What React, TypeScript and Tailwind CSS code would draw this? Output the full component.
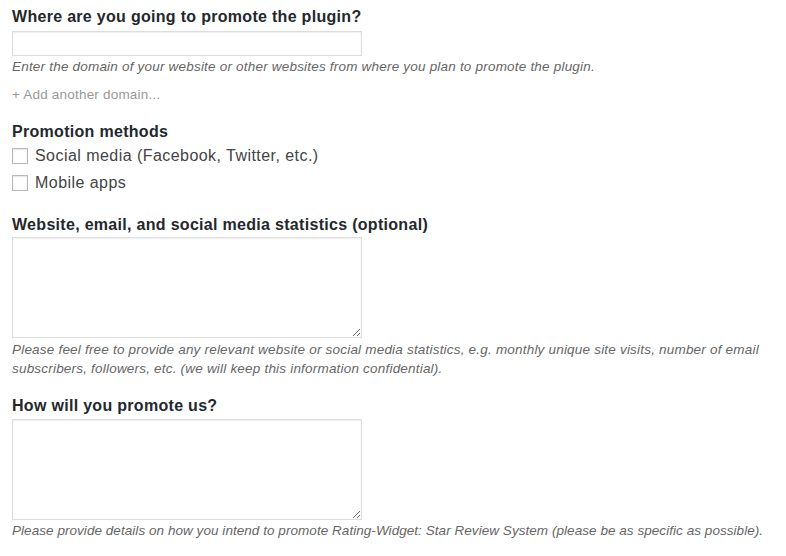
const heading = "text-[16px] font-bold leading-[20px] tracking-[0.3px] text-[#23282d]";
const desc = "text-[13.5px] italic leading-[19px] tracking-[0.2px] text-[#666]";
const box =
  "block w-[350px] border border-[#ddd] bg-white shadow-[inset_0_1px_2px_rgba(0,0,0,0.07)] outline-none";
const check =
  "block h-[16px] w-[16px] shrink-0 border border-[#b4b9be] bg-white shadow-[inset_0_1px_2px_rgba(0,0,0,0.1)]";

export default function App() {
  return (
    <div
      className="min-h-screen bg-white px-3 pt-[7px] text-[#444] text-[16px]"
      style={{ fontFamily: '"Liberation Sans", Arial, sans-serif' }}
    >
      <h3 className={heading}>Where are you going to promote the plugin?</h3>
      <input type="text" className={`${box} mt-[4px] h-[25px]`} />
      <p className={`${desc} mt-[1px]`}>
        Enter the domain of your website or other websites from where you plan to promote the plugin.
      </p>
      <p className="mt-[9px] text-[13.5px] leading-[19px] tracking-[0.2px] text-[#999]">
        + Add another domain...
      </p>

      <h3 className={`${heading} mt-[18px]`}>Promotion methods</h3>
      <div className="mt-[5px] flex flex-col gap-[10px]">
        <label className="flex items-center gap-[7px] leading-[17px] tracking-[0.45px]">
          <span className={check} />
          Social media (Facebook, Twitter, etc.)
        </label>
        <label className="flex items-center gap-[7px] leading-[17px] tracking-[0.45px]">
          <span className={check} />
          Mobile apps
        </label>
      </div>

      <h3 className={`${heading} mt-[24px]`}>
        Website, email, and social media statistics (optional)
      </h3>
      <textarea className={`${box} mt-[2px] h-[101px] resize-y`} />
      <p className={`${desc} mt-[2px] max-w-[770px]`}>
        Please feel free to provide any relevant website or social media statistics, e.g. monthly unique site visits, number of email subscribers, followers, etc. (we will keep this information confidential).
      </p>

      <h3 className={`${heading} mt-[18px]`}>How will you promote us?</h3>
      <textarea className={`${box} mt-[3px] h-[101px] resize-y`} />
      <p className="mt-[1px] whitespace-nowrap text-[13.5px] italic leading-[19px] tracking-[0.05px] text-[#666]">
        Please provide details on how you intend to promote Rating-Widget: Star Review System (please be as specific as possible).
      </p>
    </div>
  );
}
